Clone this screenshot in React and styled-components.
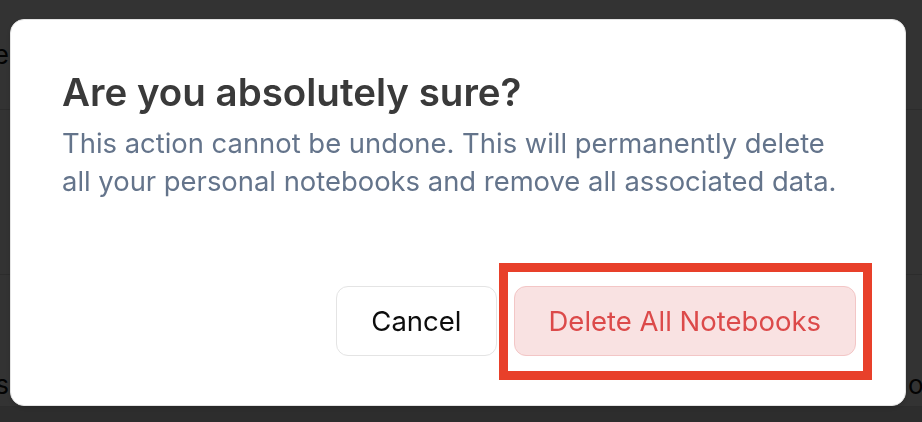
import React from 'react'
import styled, { createGlobalStyle } from 'styled-components'

const GlobalStyle = createGlobalStyle`
  html, body {
    margin: 0;
    padding: 0;
    overflow: hidden;
  }
  body {
    font-family: Inter, "Noto Sans", "Liberation Sans", sans-serif;
    background: #ffffff;
  }
`

const Page = styled.div`
  height: 100vh;
  display: flex;
  flex-direction: column;
  overflow: hidden;
`

const Row = styled.div`
  height: ${(p) => p.$height}px;
  flex: none;
  display: flex;
  justify-content: space-between;
  align-items: ${(p) => (p.$bottom ? 'flex-end' : 'center')};
  padding-bottom: ${(p) => (p.$bottom ? 6 : 0)}px;
  box-sizing: border-box;
  border-bottom: 1px solid #dcdcdc;
  color: #111;
  font-size: 26px;
`

const Footer = styled.div`
  flex: 1;
  background: #dedede;
`

/* cell text that runs past the edge of the page */
const Cell = styled.span`
  width: ${(p) => p.$width}px;
  overflow: hidden;
  display: flex;
  justify-content: ${(p) => (p.$end ? 'flex-end' : 'flex-start')};
  white-space: nowrap;
`

const Overlay = styled.div`
  position: fixed;
  inset: 0;
  background: rgba(0, 0, 0, 0.8);
  padding: 19px 0 0 10px;
  box-sizing: border-box;
`

const Dialog = styled.div`
  width: 896px;
  height: 387px;
  box-sizing: border-box;
  background: #fff;
  border-radius: 14px;
  border: 1px solid #e4e4e4;
  box-shadow: 0 2px 6px rgba(0, 0, 0, 0.15);
  padding: 49px 49px 49px 51px;
  display: flex;
  flex-direction: column;
`

const Title = styled.h2`
  margin: 0;
  font-size: 38.5px;
  line-height: 46px;
  font-weight: 600;
  color: #3a3a3a;
`

const Description = styled.p`
  margin: 9px 0 0;
  max-width: 775px;
  font-size: 27.4px;
  line-height: 38px;
  color: #64748b;
`

const Actions = styled.div`
  margin-top: auto;
  display: flex;
  justify-content: flex-end;
  gap: 17px;
`

const Button = styled.button`
  position: relative;
  height: 70px;
  padding: 0 34px;
  border-radius: 12px;
  font-family: inherit;
  font-size: 27.5px;
  font-weight: 400;
  cursor: pointer;
  border: 1.5px solid ${(p) => (p.$danger ? '#f3c6c6' : '#e4e4e4')};
  background: ${(p) => (p.$danger ? '#f9e2e2' : '#ffffff')};
  color: ${(p) => (p.$danger ? '#dc4a4a' : '#0d0d0d')};

  ${(p) =>
    p.$highlight &&
    `
    &::after {
      content: '';
      position: absolute;
      top: -24px;
      left: -16px;
      right: -17px;
      bottom: -25px;
      border: 9px solid #e8402a;
      pointer-events: none;
    }
  `}
`

export default function App() {
  return (
    <>
      <GlobalStyle />
      <Page>
        <Row $height={110}>
          <Cell $width={9} $end>
            Name
          </Cell>
        </Row>
        <Row $height={165} />
        <Row $height={132} $bottom>
          <Cell $width={9} $end>
            Notebooks
          </Cell>
          <Cell $width={14}>
            open
          </Cell>
        </Row>
        <Footer />
      </Page>
      <Overlay>
        <Dialog role="alertdialog">
          <Title>Are you absolutely sure?</Title>
          <Description>
            This action cannot be undone. This will permanently delete all your
            personal notebooks and remove all associated data.
          </Description>
          <Actions>
            <Button>Cancel</Button>
            <Button $danger $highlight>
              Delete All Notebooks
            </Button>
          </Actions>
        </Dialog>
      </Overlay>
    </>
  )
}
